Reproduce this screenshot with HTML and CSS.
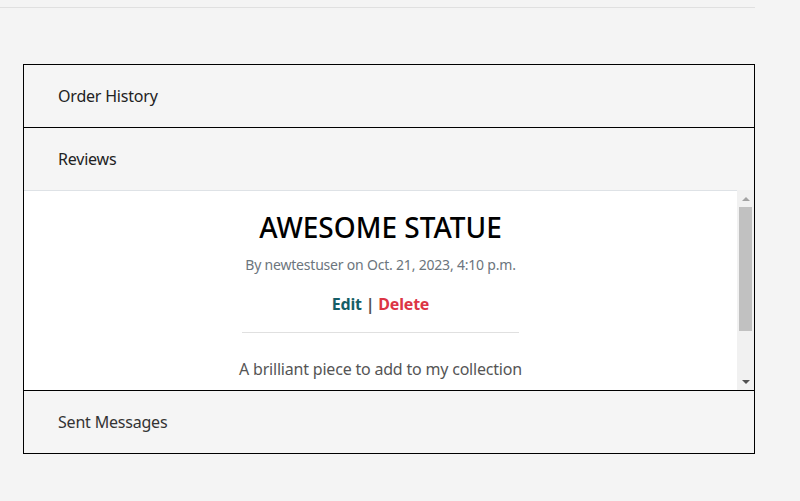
FILE: index.html
```html
<!DOCTYPE html>
<html>
<head>
<meta charset="utf-8">
<link rel="stylesheet" href="styles.css">
</head>
<body>
<div class="topline"></div>
<div class="accordion">
  <div class="acc-header">Order History</div>
  <div class="acc-header">Reviews</div>
  <div class="acc-panel">
    <div class="acc-viewport">
      <div class="review">
        <h3 class="review-title">AWESOME STATUE</h3>
        <p class="review-meta">By newtestuser on Oct. 21, 2023, 4:10 p.m.</p>
        <p class="review-actions"><a class="edit">Edit</a> <span class="sep">|</span> <a class="delete">Delete</a></p>
        <hr class="review-rule">
        <p class="review-body">A brilliant piece to add to my collection</p>
      </div>
    </div>
    <div class="scrollbar">
      <div class="sb-btn"><svg width="8" height="4" viewBox="0 0 8 4"><polygon points="0,4 8,4 4,0" fill="#a3a3a3"/></svg></div>
      <div class="sb-track"><div class="sb-thumb"></div></div>
      <div class="sb-btn"><svg width="8" height="4" viewBox="0 0 8 4"><polygon points="0,0 8,0 4,4" fill="#505050"/></svg></div>
    </div>
  </div>
  <div class="acc-header last">Sent Messages</div>
</div>
</body>
</html>
```
FILE: styles.css
```css
html, body {
  margin: 0;
  padding: 0;
  background: #f4f4f4;
  font-family: "Noto Sans", sans-serif;
  color: #222;
}
.topline {
  width: 755px;
  height: 7px;
  border-bottom: 1px solid #e0e0e0;
}
.accordion {
  margin: 56px 0 0 23px;
  width: 730px;
  border: 1px solid #000;
  background: #f5f5f5;
}
.acc-header {
  height: 62px;
  display: flex;
  align-items: center;
  padding-left: 34px;
  font-size: 16px;
  letter-spacing: -0.2px;
  color: #222;
  border-bottom: 1px solid #000;
}
.acc-header.last {
  border-bottom: none;
  color: #333;
}
.acc-header:nth-child(2) {
  border-bottom: none;
}
.acc-panel {
  height: 200px;
  display: flex;
  border-bottom: 1px solid #000;
  background: #fff;
}
.acc-viewport {
  flex: 1;
  overflow: hidden;
}
.scrollbar {
  width: 17px;
  display: flex;
  flex-direction: column;
  background: #f1f1f1;
}
.sb-btn {
  height: 17px;
  display: flex;
  align-items: center;
  justify-content: center;
}
.sb-track {
  flex: 1;
  padding: 0 2px;
}
.sb-thumb {
  height: 124px;
  background: #c1c1c1;
}
.review {
  border-top: 1px solid #dee2e6;
  display: flex;
  flex-direction: column;
  align-items: center;
  text-align: center;
  padding: 20px 0 40px;
  letter-spacing: -0.2px;
}
.review-title {
  margin: 0;
  font-size: 28px;
  font-weight: 500;
  line-height: 1.2;
  letter-spacing: 0;
  color: #000;
}
.review-meta {
  margin: 10px 0 0;
  font-size: 14px;
  color: #6c757d;
}
.review-actions {
  margin: 19px 0 0;
  font-size: 16px;
  font-weight: 700;
}
.edit { color: #155e67; }
.sep { color: #555; }
.delete { color: #dc3545; }
.review-rule {
  width: 277px;
  margin: 17px 0 0;
  border: 0;
  border-top: 1px solid #e0e0e0;
}
.review-body {
  margin: 25px 0 0;
  font-size: 16px;
  color: #555;
}
```
